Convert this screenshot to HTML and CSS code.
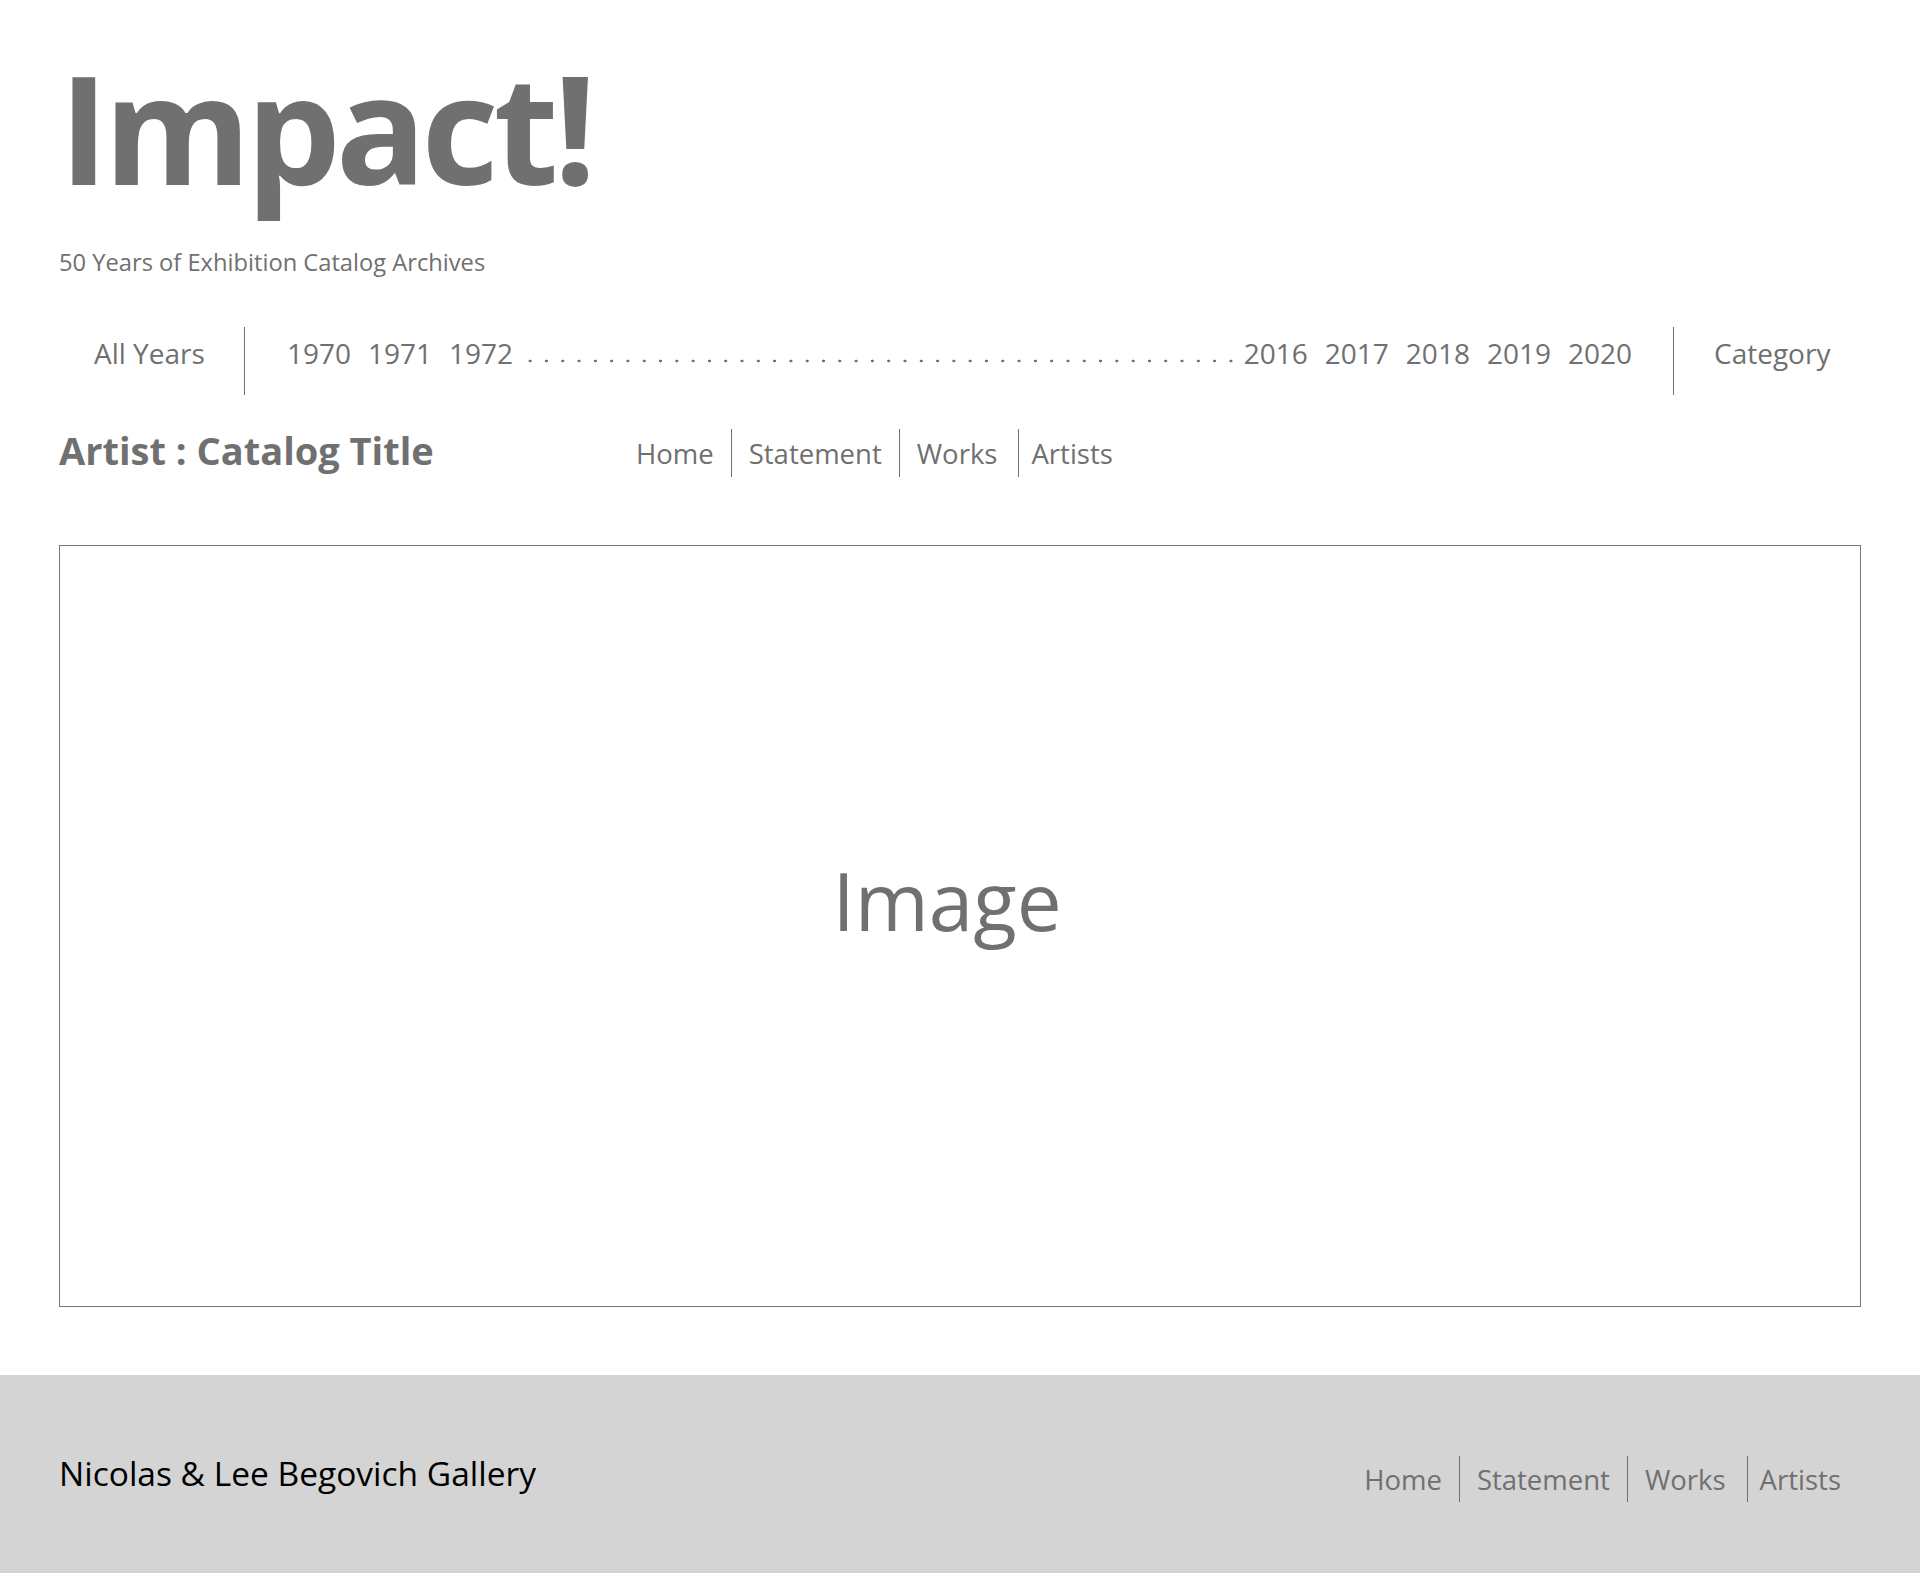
FILE: index.html
```html
<!DOCTYPE html>
<html lang="en">
<head>
<meta charset="utf-8">
<title>Impact! — 50 Years of Exhibition Catalog Archives</title>
<link rel="stylesheet" href="styles.css">
</head>
<body>
<div class="page">
  <header class="masthead">
    <h1 class="brand">Impact!</h1>
    <p class="tagline">50 Years of Exhibition Catalog Archives</p>
  </header>

  <nav class="yearbar">
    <div class="yb-all">All Years</div>
    <div class="yb-years">
      <span class="year">1970</span>
      <span class="year">1971</span>
      <span class="year">1972</span>
      <span class="dots"></span>
      <span class="year">2016</span>
      <span class="year">2017</span>
      <span class="year">2018</span>
      <span class="year">2019</span>
      <span class="year">2020</span>
    </div>
    <div class="yb-cat">Category</div>
  </nav>

  <section class="catalog-head">
    <h2 class="catalog-title">Artist : Catalog Title</h2>
    <ul class="subnav">
      <li class="subnav-item">Home</li>
      <li class="subnav-item">Statement</li>
      <li class="subnav-item works">Works</li>
      <li class="subnav-item artists">Artists</li>
    </ul>
  </section>

  <main class="image-box">
    <span class="image-label">Image</span>
  </main>
</div>

<footer class="site-footer">
  <div class="gallery">Nicolas &amp; Lee Begovich Gallery</div>
  <ul class="subnav footer-nav">
    <li class="subnav-item">Home</li>
    <li class="subnav-item">Statement</li>
    <li class="subnav-item works">Works</li>
    <li class="subnav-item artists">Artists</li>
  </ul>
</footer>
</body>
</html>
```
FILE: styles.css
```css
* { box-sizing: border-box; }

html, body {
  margin: 0;
  padding: 0;
  background: #ffffff;
}

body {
  font-family: "Open Sans", "Noto Sans", "Liberation Sans", sans-serif;
  color: #707070;
}

.page {
  padding: 52px 59px 0 59px;
}

/* Masthead */
.brand {
  margin: 0;
  font-size: 150px;
  line-height: 150px;
  font-weight: 700;
  letter-spacing: -5px;
  color: #707070;
}

.tagline {
  margin: 44px 0 0 0;
  font-size: 23.7px;
  line-height: 32px;
  color: #707070;
}

/* Year bar */
.yearbar {
  margin-top: 49px;
  height: 68px;
  display: flex;
  font-size: 28px;
  line-height: 38px;
}

.yb-all {
  width: 186px;
  flex: none;
  padding: 7px 0 0 35px;
  border-right: 1px solid #707070;
  white-space: nowrap;
}

.yb-years {
  flex: 1;
  display: flex;
  gap: 17px;
  padding: 7px 41px 0 42px;
  white-space: nowrap;
}

.dots {
  flex: 1;
  margin: 0 -8px 0 -8px;
  height: 38px;
  background-image: radial-gradient(circle, #707070 1.2px, transparent 1.7px);
  background-size: 16.3px 4px;
  background-repeat: repeat-x;
  background-position: 0 25px;
}

.yb-cat {
  width: 188px;
  flex: none;
  padding: 7px 0 0 40px;
  border-left: 1px solid #707070;
  white-space: nowrap;
}

/* Catalog head */
.catalog-head {
  margin-top: 34px;
  display: flex;
  align-items: flex-start;
}

.catalog-title {
  margin: 0;
  width: 577px;
  flex: none;
  font-size: 38px;
  line-height: 42px;
  font-weight: 700;
  color: #707070;
  white-space: nowrap;
}

.subnav {
  list-style: none;
  margin: 0;
  padding: 0;
  display: flex;
  font-size: 27.5px;
  line-height: 48px;
}

.subnav-item {
  padding: 1px 17px 0 17px;
  border-left: 1px solid #707070;
  white-space: nowrap;
  height: 48px;
}

.subnav-item:first-child {
  padding-left: 0;
  border-left: none;
}

.subnav-item.works {
  padding-right: 21px;
}

.subnav-item.artists {
  padding-left: 12px;
}

/* Image placeholder */
.image-box {
  margin-top: 68px;
  height: 762px;
  border: 1px solid #777777;
  display: flex;
  align-items: center;
  justify-content: center;
  padding: 0 26px 54px 0;
}

.image-label {
  font-size: 80px;
  color: #707070;
}

/* Footer */
.site-footer {
  margin-top: 68px;
  height: 198px;
  background: #d4d4d4;
  padding: 81px 59px 0 59px;
  display: flex;
  align-items: flex-start;
  justify-content: space-between;
}

.gallery {
  font-size: 33.5px;
  line-height: 34px;
  color: #000000;
  white-space: nowrap;
}

.footer-nav {
  line-height: 46px;
}

.footer-nav .subnav-item {
  height: 46px;
}

.footer-nav .subnav-item:last-child {
  padding-right: 20px;
}
```
